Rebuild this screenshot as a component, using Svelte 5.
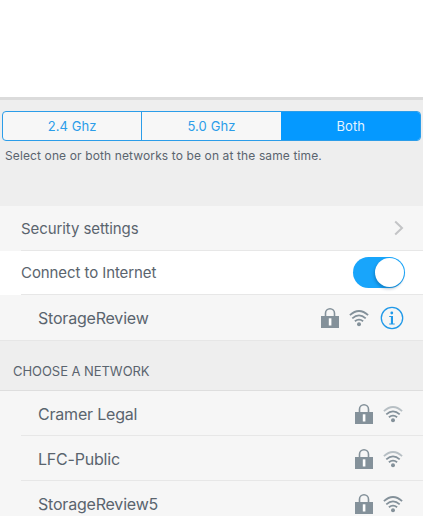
<script lang="ts">
	const bands = ['2.4 Ghz', '5.0 Ghz', 'Both'];
	let band = $state('Both');
	let connected = $state(true);

	// strength: how many wifi arcs are lit (max 3)
	const networks = [
		{ name: 'Cramer Legal', strength: 2 },
		{ name: 'LFC-Public', strength: 2 },
		{ name: 'StorageReview5', strength: 3 }
	];
</script>

{#snippet lock()}
	<svg class="lock" width="18" height="20" viewBox="0 0 18 20">
		<path d="M4.5 9V5.3a4.5 4.5 0 0 1 9 0V9" fill="none" stroke="currentColor" stroke-width="1.6" />
		<path d="M0 8h18v12H0z" fill="currentColor" />
		<rect x="7.8" y="10.3" width="2.6" height="7.2" fill="#fff" />
	</svg>
{/snippet}

{#snippet wifi(strength: number)}
	<svg class="wifi" width="20" height="17" viewBox="0 0 20 17">
		<g fill="none" stroke="currentColor" stroke-width="1.8">
			<path d="M.9 5.2Q10-3.1 19.1 5.2" opacity={strength > 2 ? 1 : 0.55} />
			<path d="M3.3 8.4q6.7-6 13.4 0" />
			<path d="M5.9 11.3q4.1-3.4 8.2 0" />
		</g>
		<circle cx="10" cy="14.2" r="2" fill="currentColor" />
	</svg>
{/snippet}

<main>
	<div class="top"></div>

	<section class="bands">
		<div class="segmented">
			{#each bands as item}
				<button class:active={band === item} onclick={() => (band = item)}>{item}</button>
			{/each}
		</div>
		<p class="hint">Select one or both networks to be on at the same time.</p>
	</section>

	<div class="row">
		<span class="label">Security settings</span>
		<svg class="chevron" width="10" height="16" viewBox="0 0 10 16">
			<path d="M1.2 1.5 8 8l-6.8 6.5" fill="none" stroke="#c3c4c6" stroke-width="2" />
		</svg>
	</div>
	<div class="row white">
		<span class="label">Connect to Internet</span>
		<button
			class="toggle"
			class:on={connected}
			aria-label="Connect to Internet"
			onclick={() => (connected = !connected)}
		>
			<span class="knob"></span>
		</button>
	</div>
	<div class="row indent current">
		<span class="label">StorageReview</span>
		{@render lock()}
		{@render wifi(3)}
		<svg class="info" width="24" height="24" viewBox="0 0 24 24">
			<circle cx="12" cy="12" r="10.7" fill="none" stroke="#2199e8" stroke-width="1.3" />
			<circle cx="11.8" cy="7" r="1.4" fill="#2199e8" />
			<path d="M9.2 10.1h3.8v7.4h1.7v.9H9.2v-.9h1.7V11H9.2z" fill="#2199e8" />
		</svg>
	</div>

	<h2>CHOOSE A NETWORK</h2>

	{#each networks as network}
		<div class="row indent network">
			<span class="label">{network.name}</span>
			{@render lock()}
			{@render wifi(network.strength)}
		</div>
	{/each}
</main>

<style>
	:global(body) {
		background: #eeeeee;
	}

	main {
		height: 516px;
		overflow: hidden;
		background: #eeeeee;
		color: #5a646e;
		font-family: Inter, Roboto, sans-serif;
	}

	.top {
		height: 97px;
		background: #fff;
		border-bottom: 3px solid #dbdbdb;
	}

	.bands {
		box-sizing: border-box;
		height: 106px;
		padding: 11px 2px 0;
	}

	.segmented {
		display: flex;
		box-sizing: border-box;
		height: 30px;
		border: 1px solid #2b9de9;
		border-radius: 4px;
		overflow: hidden;
		background: #f7f7f7;
	}

	.segmented button {
		flex: 1;
		padding: 0;
		border: 0;
		background: none;
		color: #2b9de9;
		font: 13px Inter, sans-serif;
		letter-spacing: 0.1px;
	}

	.segmented button + button {
		border-left: 1px solid #2b9de9;
	}

	.segmented button.active {
		background: #0599ff;
		border-color: #0599ff;
		color: #e4f4ff;
	}

	.hint {
		margin: 7px 0 0 3px;
		font-size: 12px;
		line-height: 16px;
		letter-spacing: 0.12px;
		white-space: nowrap;
	}

	.row {
		position: relative;
		display: flex;
		align-items: center;
		box-sizing: border-box;
		height: 45px;
		padding: 0 18px 1px 21px;
		background: #f6f6f6;
		font-size: 15px;
		letter-spacing: -0.08px;
	}

	.row::after {
		content: '';
		position: absolute;
		left: 21px;
		right: 0;
		bottom: 0;
		height: 1px;
		background: #e7e7e7;
	}

	.row.white {
		height: 44px;
		background: #fff;
	}

	.row.indent {
		padding-left: 38px;
		font-size: 16px;
		letter-spacing: -0.2px;
	}

	.row.current {
		padding-right: 19px;
		padding-bottom: 0;
	}

	.row.current::after {
		display: none;
	}

	.row.network {
		padding-right: 20px;
		padding-bottom: 0;
	}

	.label {
		flex: 1;
	}

	.chevron {
		margin-right: 1px;
	}

	.lock,
	.wifi {
		color: #84919a;
	}

	.wifi {
		margin: 2px 0 0 10px;
	}

	.info {
		margin-left: 11px;
	}

	.toggle {
		display: flex;
		align-items: center;
		width: 52px;
		height: 31px;
		padding: 0 1px;
		border: 0;
		border-radius: 16px;
		background: #d5d5d5;
	}

	.toggle.on {
		justify-content: flex-end;
		background: #18a5fb;
	}

	.knob {
		width: 29px;
		height: 29px;
		border-radius: 50%;
		background: #fff;
		box-shadow: -1px 2px 3px rgba(0, 50, 90, 0.3);
	}

	h2 {
		box-sizing: border-box;
		height: 51px;
		margin: 0;
		padding: 21px 0 0 13px;
		border-top: 1px solid #e6e6e6;
		border-bottom: 1px solid #dedede;
		font-size: 13px;
		font-weight: 400;
		line-height: 18px;
		letter-spacing: -0.05px;
	}
</style>
